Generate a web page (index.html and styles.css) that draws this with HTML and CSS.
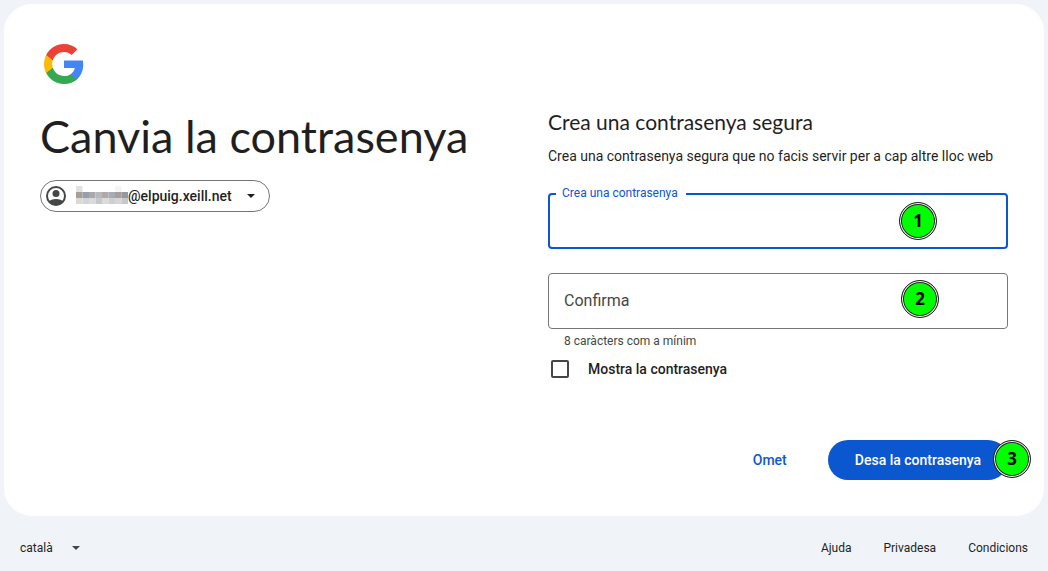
FILE: index.html
```
<!DOCTYPE html>
<html lang="ca">
  <head>
    <meta charset="UTF-8" />
    <meta name="viewport" content="width=device-width, initial-scale=1" />
    <title>Canvia la contrasenya</title>
    <link rel="stylesheet" href="styles.css" />
  </head>
  <body>
    <main class="card">
      <section class="intro">
        <svg class="logo" viewBox="0 0 48 48" role="img" aria-label="Google">
          <g transform="translate(2.2 2.2) scale(.909)">
            <path fill="#4285F4" d="M45.12 24.5c0-1.56-.14-3.06-.4-4.5H24v8.51h11.84c-.51 2.75-2.06 5.08-4.39 6.64v5.52h7.11c4.16-3.83 6.56-9.47 6.56-16.17z" />
            <path fill="#34A853" d="M24 46c5.94 0 10.92-1.97 14.56-5.33l-7.11-5.52c-1.97 1.32-4.49 2.1-7.45 2.1-5.73 0-10.58-3.87-12.31-9.07H4.34v5.7C7.96 41.07 15.4 46 24 46z" />
            <path fill="#FBBC05" d="M11.69 28.18C11.25 26.86 11 25.45 11 24s.25-2.86.69-4.18v-5.7H4.34C2.85 17.09 2 20.45 2 24s.85 6.91 2.34 9.88l7.35-5.7z" />
            <path fill="#EA4335" d="M24 10.75c3.23 0 6.13 1.11 8.41 3.29l6.31-6.31C34.91 4.18 29.93 2 24 2 15.4 2 7.96 6.93 4.34 14.12l7.35 5.7c1.73-5.2 6.58-9.07 12.31-9.07z" />
          </g>
        </svg>
        <h1>Canvia la contrasenya</h1>
        <button class="account" type="button">
          <svg class="avatar" viewBox="0 0 24 24" aria-hidden="true">
            <circle cx="12" cy="12" r="9" fill="none" stroke="#444746" stroke-width="2" />
            <circle cx="12" cy="9.5" r="3.5" />
            <path d="M5 17.3C6.9 15.8 9.3 15 12 15s5.1.8 7 2.3A9 9 0 0 1 12 21a9 9 0 0 1-7-3.7z" />
          </svg>
          <svg class="hidden-name" viewBox="0 0 52 20" aria-hidden="true">
            <path fill="#e2e2e2" d="M0 0h6.5v6H0z" />
            <path fill="#f5f5f5" d="M39 0h6.5v6H39z" />
            <path fill="#a69f99" d="M0 6h6.5v6H0z" />
            <path fill="#989fa8" d="M6.5 6H13v6H6.500z" />
            <path fill="#aba9a8" d="M13 6h6.5v6H13z" />
            <path fill="#b6baba" d="M19.500 6H26v6h-6.500z" />
            <path fill="#aeaaa7" d="M26 6h6.500v6H26z" />
            <path fill="#a5acb5" d="M32.500 6H39v6h-6.500z" />
            <path fill="#a69f99" d="M39 6h6.500v6H39z" />
            <path fill="#929aa1" d="M45.500 6H52v6h-6.500z" />
            <path fill="#ded8d4" d="M0 12h6.500v6H0z" />
            <path fill="#d0d5da" d="M6.500 12H13v6H6.500z" />
            <path fill="#d8dadd" d="M13 12h6.500v6H13z" />
            <path fill="#c5c9cd" d="M19.500 12H26v6h-6.500z" />
            <path fill="#dedad7" d="M26 12h6.500v6H26z" />
            <path fill="#cfcfd1" d="M32.500 12H39v6h-6.500z" />
            <path fill="#d9d5d2" d="M39 12h6.500v6H39z" />
            <path fill="#c4c8cd" d="M45.500 12H52v6h-6.500z" />
          </svg>
          <span>@elpuig.xeill.net</span>
          <svg class="arrow" viewBox="0 0 8 4" aria-hidden="true"><path d="M0 0h8L4 4z" /></svg>
        </button>
      </section>

      <form class="password-form">
        <h2>Crea una contrasenya segura</h2>
        <p class="description">Crea una contrasenya segura que no facis servir per a cap altre lloc web</p>

        <div class="field field-active">
          <input type="password" id="password" autocomplete="new-password" />
          <label for="password">Crea una contrasenya</label>
          <span class="step step-one">1</span>
        </div>
        <div class="field">
          <input type="password" id="confirm" autocomplete="new-password" aria-describedby="hint" />
          <label for="confirm">Confirma</label>
          <span class="step step-two">2</span>
        </div>
        <p class="hint" id="hint">8 caràcters com a mínim</p>

        <label class="show-password">
          <input type="checkbox" />
          Mostra la contrasenya
        </label>

        <div class="actions">
          <button class="skip" type="button">Omet</button>
          <div class="save-wrap">
            <button class="save" type="submit">Desa la contrasenya</button>
            <span class="step step-three">3</span>
          </div>
        </div>
      </form>
    </main>

    <footer>
      <div class="language">
        <select aria-label="Idioma">
          <option>català</option>
        </select>
        <svg class="arrow" viewBox="0 0 8 4" aria-hidden="true"><path d="M0 0h8L4 4z" /></svg>
      </div>
      <nav>
        <a href="#">Ajuda</a>
        <a href="#">Privadesa</a>
        <a href="#">Condicions</a>
      </nav>
    </footer>
  </body>
</html>
```
FILE: styles.css
```
* {
  box-sizing: border-box;
}

body {
  margin: 0;
  padding: 4px 4px 0;
  background-color: #f0f4f9;
  color: #1f1f1f;
  font-family: Roboto, sans-serif;
  font-size: 14px;
}

h1,
h2,
p {
  margin: 0;
  font-weight: 400;
}

button,
input,
select {
  font: inherit;
}

.card {
  display: grid;
  grid-template-columns: 1fr 1fr;
  gap: 48px;
  padding: 36px;
  background: white;
  border-radius: 28px;
}

.logo {
  display: block;
  width: 48px;
  height: 48px;
}

h1 {
  margin: 22px 0 18px;
  font-family: Lato, sans-serif;
  font-size: 45px;
  line-height: 52px;
  white-space: nowrap;
}

.account {
  display: flex;
  align-items: center;
  height: 32px;
  padding: 0 14px 0 3px;
  border: 1px solid #747775;
  border-radius: 16px;
  background: white;
  color: #1f1f1f;
  font-weight: 500;
}

.avatar {
  width: 24px;
  height: 24px;
  margin-right: 8px;
  fill: #444746;
}

.hidden-name {
  width: 52px;
  height: 20px;
}

.arrow {
  width: 8px;
  height: 4px;
  fill: #1f1f1f;
}

.account .arrow {
  margin-left: 15px;
}

.password-form {
  padding-top: 68px;
}

h2 {
  font-family: Lato, sans-serif;
  font-size: 21px;
  line-height: 28px;
}

.description {
  margin: 10px 0 27px;
  line-height: 20px;
}

.field {
  position: relative;
}

.field input {
  display: block;
  width: 100%;
  height: 56px;
  padding: 0 16px;
  border: 1px solid #747775;
  border-radius: 4px;
  background: white;
  font-size: 16px;
  outline: none;
}

.field label {
  position: absolute;
  top: 16px;
  left: 16px;
  color: #444746;
  font-size: 16px;
  line-height: 24px;
}

.field-active {
  margin-bottom: 24px;
}

.field-active input {
  border: 2px solid #0b57d0;
}

.field-active label {
  top: -8px;
  left: 8px;
  padding: 0 8px 0 6px;
  background: white;
  color: #0b57d0;
  font-size: 12px;
  line-height: 16px;
}

.hint {
  padding: 4px 16px 0;
  color: #444746;
  font-size: 12px;
  line-height: 16px;
}

.show-password {
  display: flex;
  align-items: center;
  gap: 19px;
  width: max-content;
  margin: 10px 0 0 3px;
  line-height: 20px;
  font-weight: 500;
}

.show-password input {
  appearance: none;
  width: 18px;
  height: 18px;
  margin: 0;
  border: 2px solid #444746;
  border-radius: 2px;
}

.show-password input:checked {
  background: #0b57d0;
  border-color: #0b57d0;
}

.actions {
  display: flex;
  justify-content: flex-end;
  gap: 16px;
  margin-top: 61px;
}

.actions button {
  height: 40px;
  padding: 0 24px;
  border: none;
  border-radius: 20px;
  font-weight: 500;
}

.actions .skip {
  padding: 0 25px;
  background: white;
  color: #0b57d0;
}

.actions .save {
  padding: 0 27px;
  background: #0b57d0;
  color: white;
}

.save-wrap {
  position: relative;
}

/* numbered marks on top of the form */
.step {
  position: absolute;
  width: 38px;
  height: 38px;
  border: 1px solid #222;
  border-radius: 50%;
  background: #00ff00;
  box-shadow: inset 0 0 0 1px white, inset 0 0 0 2px #222;
  color: black;
  font-family: "Noto Sans", sans-serif;
  font-size: 17px;
  font-weight: 700;
  line-height: 36px;
  text-align: center;
}

.step-one {
  top: 9px;
  right: 71px;
}

.step-two {
  top: 7px;
  right: 69px;
}

.step-three {
  top: 0;
  right: -23px;
}

footer {
  display: flex;
  align-items: center;
  justify-content: space-between;
  padding: 24px 16px 16px;
  font-size: 12px;
  line-height: 16px;
}

.language {
  display: flex;
  align-items: center;
}

.language select {
  appearance: none;
  width: 52px;
  padding: 0;
  border: none;
  background: none;
  color: #1f1f1f;
}

.language .arrow {
  fill: #444746;
}

nav {
  display: flex;
  gap: 32px;
}

nav a {
  color: #1f1f1f;
  text-decoration: none;
}
```
